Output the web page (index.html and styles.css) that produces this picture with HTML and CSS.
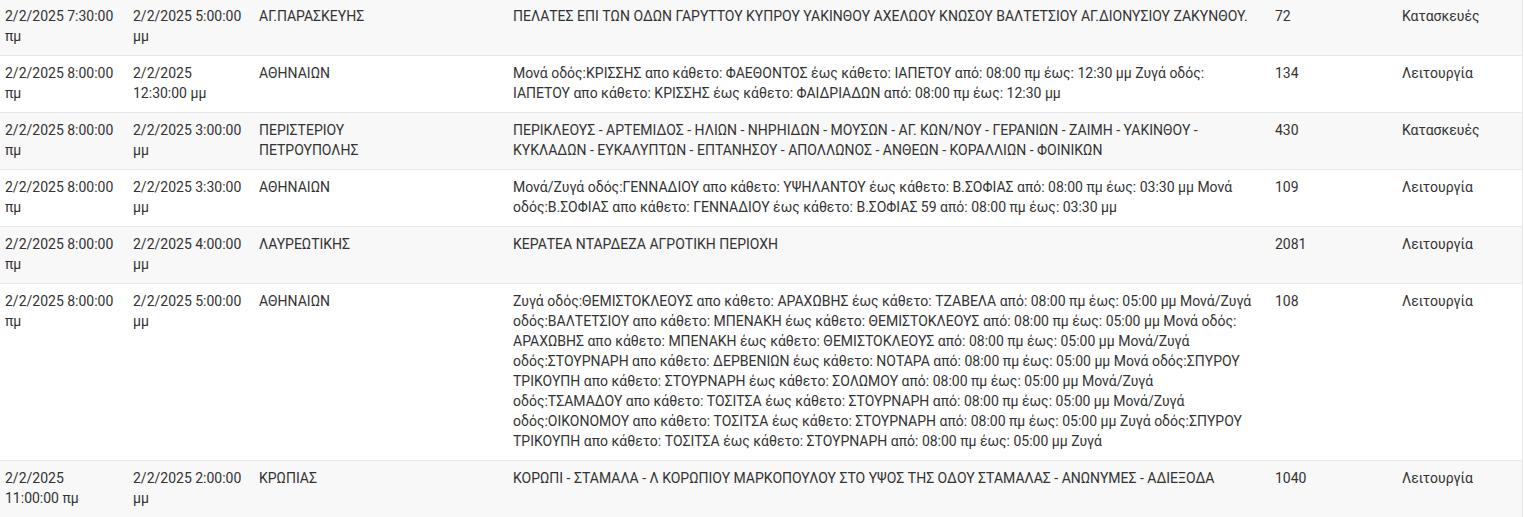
FILE: index.html
```html
<!DOCTYPE html>
<html lang="el">
<head>
<meta charset="utf-8">
<title>Διακοπές</title>
<link rel="stylesheet" href="styles.css">
</head>
<body>
<table class="outages">
  <colgroup>
    <col class="c-start"><col class="c-end"><col class="c-area"><col class="c-desc"><col class="c-num"><col class="c-type">
  </colgroup>
  <tbody>
    <tr>
      <td>2/2/2025 7:30:00 πμ</td>
      <td>2/2/2025 5:00:00 μμ</td>
      <td class="area">ΑΓ.ΠΑΡΑΣΚΕΥΗΣ</td>
      <td>ΠΕΛΑΤΕΣ ΕΠΙ ΤΩΝ ΟΔΩΝ ΓΑΡΥΤΤΟΥ ΚΥΠΡΟΥ ΥΑΚΙΝΘΟΥ ΑΧΕΛΩΟΥ ΚΝΩΣΟΥ ΒΑΛΤΕΤΣΙΟΥ ΑΓ.ΔΙΟΝΥΣΙΟΥ ΖΑΚΥΝΘΟΥ.</td>
      <td>72</td>
      <td>Κατασκευές</td>
    </tr>
    <tr>
      <td>2/2/2025 8:00:00 πμ</td>
      <td>2/2/2025 12:30:00 μμ</td>
      <td class="area">ΑΘΗΝΑΙΩΝ</td>
      <td>Μονά οδός:ΚΡΙΣΣΗΣ απο κάθετο: ΦΑΕΘΟΝΤΟΣ έως κάθετο: ΙΑΠΕΤΟΥ από: 08:00 πμ έως: 12:30 μμ Ζυγά οδός: ΙΑΠΕΤΟΥ απο κάθετο: ΚΡΙΣΣΗΣ έως κάθετο: ΦΑΙΔΡΙΑΔΩΝ από: 08:00 πμ έως: 12:30 μμ</td>
      <td>134</td>
      <td>Λειτουργία</td>
    </tr>
    <tr>
      <td>2/2/2025 8:00:00 πμ</td>
      <td>2/2/2025 3:00:00 μμ</td>
      <td class="area">ΠΕΡΙΣΤΕΡΙΟΥ ΠΕΤΡΟΥΠΟΛΗΣ</td>
      <td>ΠΕΡΙΚΛΕΟΥΣ - ΑΡΤΕΜΙΔΟΣ - ΗΛΙΩΝ - ΝΗΡΗΙΔΩΝ - ΜΟΥΣΩΝ - ΑΓ. ΚΩΝ/ΝΟΥ - ΓΕΡΑΝΙΩΝ - ΖΑΙΜΗ - ΥΑΚΙΝΘΟΥ - ΚΥΚΛΑΔΩΝ - ΕΥΚΑΛΥΠΤΩΝ - ΕΠΤΑΝΗΣΟΥ - ΑΠΟΛΛΩΝΟΣ - ΑΝΘΕΩΝ - ΚΟΡΑΛΛΙΩΝ - ΦΟΙΝΙΚΩΝ</td>
      <td>430</td>
      <td>Κατασκευές</td>
    </tr>
    <tr>
      <td>2/2/2025 8:00:00 πμ</td>
      <td>2/2/2025 3:30:00 μμ</td>
      <td class="area">ΑΘΗΝΑΙΩΝ</td>
      <td>Μονά/Ζυγά οδός:ΓΕΝΝΑΔΙΟΥ απο κάθετο: ΥΨΗΛΑΝΤΟΥ έως κάθετο: Β.ΣΟΦΙΑΣ από: 08:00 πμ έως: 03:30 μμ Μονά οδός:Β.ΣΟΦΙΑΣ απο κάθετο: ΓΕΝΝΑΔΙΟΥ έως κάθετο: Β.ΣΟΦΙΑΣ 59 από: 08:00 πμ έως: 03:30 μμ</td>
      <td>109</td>
      <td>Λειτουργία</td>
    </tr>
    <tr>
      <td>2/2/2025 8:00:00 πμ</td>
      <td>2/2/2025 4:00:00 μμ</td>
      <td class="area">ΛΑΥΡΕΩΤΙΚΗΣ</td>
      <td>ΚΕΡΑΤΕΑ ΝΤΑΡΔΕΖΑ ΑΓΡΟΤΙΚΗ ΠΕΡΙΟΧΗ</td>
      <td>2081</td>
      <td>Λειτουργία</td>
    </tr>
    <tr>
      <td>2/2/2025 8:00:00 πμ</td>
      <td>2/2/2025 5:00:00 μμ</td>
      <td class="area">ΑΘΗΝΑΙΩΝ</td>
      <td>Ζυγά οδός:ΘΕΜΙΣΤΟΚΛΕΟΥΣ απο κάθετο: ΑΡΑΧΩΒΗΣ έως κάθετο: ΤΖΑΒΕΛΑ από: 08:00 πμ έως: 05:00 μμ Μονά/Ζυγά οδός:ΒΑΛΤΕΤΣΙΟΥ απο κάθετο: ΜΠΕΝΑΚΗ έως κάθετο: ΘΕΜΙΣΤΟΚΛΕΟΥΣ από: 08:00 πμ έως: 05:00 μμ Μονά οδός: ΑΡΑΧΩΒΗΣ απο κάθετο: ΜΠΕΝΑΚΗ έως κάθετο: ΘΕΜΙΣΤΟΚΛΕΟΥΣ από: 08:00 πμ έως: 05:00 μμ Μονά/Ζυγά οδός:ΣΤΟΥΡΝΑΡΗ απο κάθετο: ΔΕΡΒΕΝΙΩΝ έως κάθετο: ΝΟΤΑΡΑ από: 08:00 πμ έως: 05:00 μμ Μονά οδός:ΣΠΥΡΟΥ ΤΡΙΚΟΥΠΗ απο κάθετο: ΣΤΟΥΡΝΑΡΗ έως κάθετο: ΣΟΛΩΜΟΥ από: 08:00 πμ έως: 05:00 μμ Μονά/Ζυγά οδός:ΤΣΑΜΑΔΟΥ απο κάθετο: ΤΟΣΙΤΣΑ έως κάθετο: ΣΤΟΥΡΝΑΡΗ από: 08:00 πμ έως: 05:00 μμ Μονά/Ζυγά οδός:ΟΙΚΟΝΟΜΟΥ απο κάθετο: ΤΟΣΙΤΣΑ έως κάθετο: ΣΤΟΥΡΝΑΡΗ από: 08:00 πμ έως: 05:00 μμ Ζυγά οδός:ΣΠΥΡΟΥ ΤΡΙΚΟΥΠΗ απο κάθετο: ΤΟΣΙΤΣΑ έως κάθετο: ΣΤΟΥΡΝΑΡΗ από: 08:00 πμ έως: 05:00 μμ Ζυγά</td>
      <td>108</td>
      <td>Λειτουργία</td>
    </tr>
    <tr>
      <td>2/2/2025 11:00:00 πμ</td>
      <td>2/2/2025 2:00:00 μμ</td>
      <td class="area">ΚΡΩΠΙΑΣ</td>
      <td>ΚΟΡΩΠΙ - ΣΤΑΜΑΛΑ - Λ ΚΟΡΩΠΙΟΥ ΜΑΡΚΟΠΟΥΛΟΥ ΣΤΟ ΥΨΟΣ ΤΗΣ ΟΔΟΥ ΣΤΑΜΑΛΑΣ - ΑΝΩΝΥΜΕΣ - ΑΔΙΕΞΟΔΑ</td>
      <td>1040</td>
      <td>Λειτουργία</td>
    </tr>
  </tbody>
</table>
</body>
</html>
```

FILE: styles.css
```css
html, body {
  margin: 0;
  padding: 0;
  background: #ffffff;
}

body {
  font-family: Roboto, "Noto Sans", "DejaVu Sans", sans-serif;
  font-size: 14px;
  line-height: 20px;
  color: #333333;
}

.outages {
  width: 1522px;
  table-layout: fixed;
  border-collapse: collapse;
  border-right: 1px solid #e8e8e8;
}

.c-start { width: 128px; }
.c-end { width: 126px; }
.c-area { width: 254px; }
.c-desc { width: 762px; }
.c-num { width: 127px; }
.c-type { width: 125px; }

.outages td {
  padding: 7px 10px 9px 5px;
  vertical-align: top;
  text-align: left;
  border-bottom: 1px solid #e8e8e8;
}

.outages tr:first-child td {
  padding-top: 6px;
}

.outages td.area {
  padding-right: 80px;
}

.outages tr:nth-child(odd) td {
  background: #f8f8f8;
}

.outages tr:nth-child(even) td {
  background: #ffffff;
}
```
